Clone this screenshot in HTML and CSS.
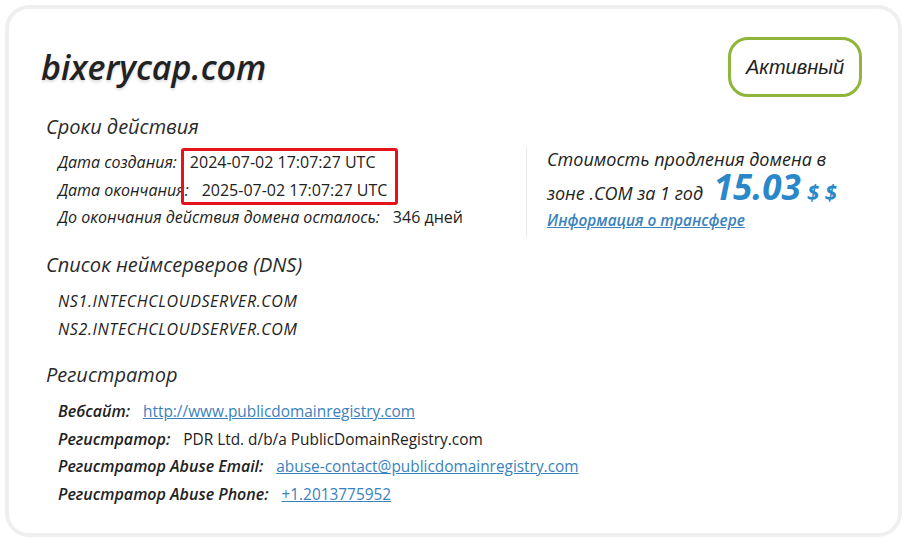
FILE: index.html
```html
<!DOCTYPE html>
<html lang="ru">
<head>
<meta charset="utf-8">
<title>bixerycap.com — WHOIS</title>
<link rel="stylesheet" href="styles.css">
</head>
<body>
<div class="card">
  <header class="head">
    <h1 class="domain">bixerycap.com</h1>
    <span class="status">Активный</span>
  </header>

  <h2 class="section-title">Сроки действия</h2>
  <div class="terms">
    <div class="rows dates">
      <div class="row"><span class="label">Дата создания:</span><span class="value">2024-07-02 17:07:27 UTC</span></div>
      <div class="row"><span class="label">Дата окончания:</span><span class="value">2025-07-02 17:07:27 UTC</span></div>
      <div class="row"><span class="label">До окончания действия домена осталось:</span><span class="value">346 дней</span></div>
      <div class="highlight"></div>
    </div>
    <div class="renew">
      <p class="renew-text">Стоимость продления домена в</p>
      <p class="renew-text">зоне .COM за 1 год <span class="price">15.03</span><span class="currency">$ $</span></p>
      <a class="transfer" href="#">Информация о трансфере</a>
    </div>
  </div>

  <h2 class="section-title gap-dns">Список неймсерверов (DNS)</h2>
  <div class="rows">
    <div class="row ns">NS1.INTECHCLOUDSERVER.COM</div>
    <div class="row ns">NS2.INTECHCLOUDSERVER.COM</div>
  </div>

  <h2 class="section-title gap-reg">Регистратор</h2>
  <div class="rows registrar">
    <div class="row"><span class="label strong">Вебсайт:</span><a class="value link" href="#">http://www.publicdomainregistry.com</a></div>
    <div class="row"><span class="label strong">Регистратор:</span><span class="value">PDR Ltd. d/b/a PublicDomainRegistry.com</span></div>
    <div class="row"><span class="label strong">Регистратор Abuse Email:</span><a class="value link" href="#">abuse-contact@publicdomainregistry.com</a></div>
    <div class="row"><span class="label strong">Регистратор Abuse Phone:</span><a class="value link" href="#">+1.2013775952</a></div>
  </div>
</div>
</body>
</html>
```
FILE: styles.css
```css
html, body {
  margin: 0;
  padding: 0;
  background: #ffffff;
}

body {
  padding: 5px 6px 2px 5px;
  font-family: "Open Sans", "Noto Sans", sans-serif;
  color: #222;
}

.card {
  height: 532px;
  box-sizing: border-box;
  border: 4px solid #efefef;
  border-radius: 24px;
  background: #fff;
  padding: 28px 36px 0 37px;
}

.head {
  display: flex;
  justify-content: space-between;
  align-items: center;
  height: 60px;
}

.domain {
  margin: 0 0 0 -5px;
  font-size: 34px;
  font-style: italic;
  font-weight: 600;
  line-height: 40px;
  color: #222;
  text-shadow: 0 2px 3px rgba(0, 0, 0, 0.15);
}

.status {
  box-sizing: border-box;
  height: 60px;
  width: 134px;
  border: 3px solid #8fb53a;
  border-radius: 20px;
  display: flex;
  align-items: center;
  justify-content: center;
  font-family: "Liberation Sans", Arial, sans-serif;
  font-style: italic;
  font-size: 20px;
  color: #222;
}

.section-title {
  margin: 15px 0 0;
  font-size: 20px;
  font-style: italic;
  font-weight: 400;
  line-height: 30px;
  color: #2a2a2a;
}

.section-title.gap-dns {
  margin-top: 13px;
}

.section-title.gap-reg {
  margin-top: 17px;
}

.terms {
  display: flex;
  margin-top: 7px;
}

.rows {
  position: relative;
  padding-left: 12px;
  margin-top: 8px;
}

.terms .rows {
  margin-top: 0;
  width: 468px;
}

.row {
  line-height: 27.5px;
  font-size: 16px;
  white-space: nowrap;
}

.label {
  font-style: italic;
  font-weight: 500;
  margin-right: 13px;
}

.label.strong {
  font-weight: 600;
  margin-right: 13px;
}

.value {
  color: #222;
}

.registrar .value {
  font-size: 15.4px;
}

.link {
  color: #3a82bd;
  text-decoration: underline;
}

.ns {
  font-style: italic;
  letter-spacing: 0.6px;
}

/* red marker around the two date values */
.highlight {
  position: absolute;
  left: 135px;
  top: -1.5px;
  width: 217px;
  height: 57px;
  box-sizing: border-box;
  border: 3px solid #e5141c;
  border-radius: 3px;
}

.renew {
  border-left: 1px solid #ececec;
  margin-top: -2px;
  padding: 0 0 4px 20px;
}

.renew-text {
  margin: 0;
  font-size: 18px;
  font-style: italic;
  line-height: 24px;
}

.renew-text + .renew-text {
  line-height: 44px;
  margin-top: -6px;
}

.price {
  font-size: 35px;
  font-weight: 700;
  font-style: italic;
  color: #2a88c9;
  margin-left: 6px;
}

.currency {
  font-size: 22px;
  font-weight: 700;
  font-style: italic;
  color: #2a88c9;
  margin-left: 6px;
}

.transfer {
  display: block;
  margin-top: -6px;
  font-size: 15.4px;
  font-style: italic;
  font-weight: 600;
  line-height: 24px;
  color: #3a82bd;
  text-decoration: underline;
}
```
